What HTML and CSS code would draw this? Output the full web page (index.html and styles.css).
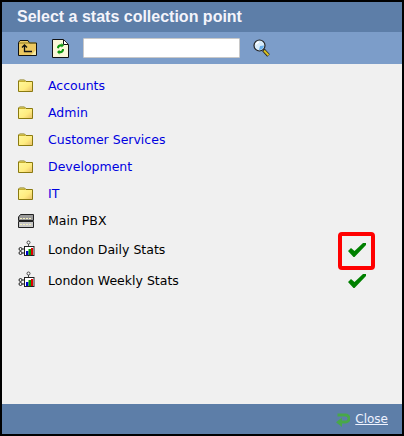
FILE: index.html
```html
<!DOCTYPE html>
<html lang="en">
<head>
<meta charset="utf-8">
<title>Select a stats collection point</title>
<link rel="stylesheet" href="styles.css">
</head>
<body>
<svg class="defs" width="0" height="0">
  <defs>
    <linearGradient id="fold" x1="0" y1="0" x2="1" y2="1"><stop offset="0" stop-color="#fffaa0"/><stop offset="0.6" stop-color="#ffec80"/><stop offset="1" stop-color="#e8bc68"/></linearGradient>
    <symbol id="folder" viewBox="0 0 16 14">
      <path d="M.5 12.500V2L1.500 1H6.500L8 2.500H14.500V12.500Z" fill="url(#fold)" stroke="#8a7a10" stroke-width="1"/>
      <path d="M1 2.500H7.500" stroke="#c8b030"/>
    </symbol>
    <symbol id="stats" viewBox="0 0 17 16">
      <circle cx="2.500" cy="9" r="1.500" fill="none" stroke="#222"/>
      <circle cx="2.500" cy="13" r="1.500" fill="none" stroke="#222"/>
      <path d="M4 9H6M4 13H6" stroke="#222"/>
      <circle cx="10.500" cy="2.500" r="1.500" fill="#fff" stroke="#444"/>
      <path d="M10.500 4V6" stroke="#444"/>
      <rect x="6.500" y="6.500" width="9.500" height="9" fill="#fff" stroke="#222"/>
      <rect x="8" y="11" width="2.500" height="4" fill="#0000d0"/>
      <rect x="10.500" y="9" width="2.500" height="6" fill="#00a000"/>
      <rect x="13" y="8" width="2" height="7" fill="#e00000"/>
    </symbol>
    <symbol id="check" viewBox="0 0 18 14">
      <path d="M0 8L3 5L6.500 8L15 0H18V2L6.500 14H5.500Z" fill="#008000"/>
    </symbol>
  </defs>
</svg>
<main class="dialog">
  <header class="title">Select a stats collection point</header>
  <div class="toolbar">
    <svg class="tool-up" width="21" height="18" viewBox="0 0 21 18">
      <path d="M1.500 16.500V3.500L3 1.500H11L12.500 4H19.500V16.500Z" fill="#ecc860" stroke="#111"/>
      <path d="M2 4H19" stroke="#8c7a20"/>
      <path d="M5 8.500L7.500 6L10 8.500M7.500 7V12.500H15" fill="none" stroke="#111" stroke-width="1.300"/>
      <path d="M14 16L19 11V16Z" fill="#f6e9a0"/>
    </svg>
    <svg class="tool-refresh" width="17" height="19" viewBox="0 0 17 19">
      <path d="M.5.500H11.500L16.500 5.500V18.500H.500Z" fill="#fbf8d8" stroke="#111"/>
      <path d="M11.500 1V5.500H16" fill="#fff" stroke="#111"/>
      <path d="M5 9A3.500 3.500 0 0 1 9.500 5.500V4L12 6.500L9.500 8.500V7.500A2 2 0 0 0 7 9.500Z" fill="#109810"/>
      <path d="M12 10A3.500 3.500 0 0 1 7.500 14V15.500L5 13L7.500 10.800V12A2 2 0 0 0 10 10Z" fill="#109810"/>
    </svg>
    <input class="search" type="text" aria-label="Search">
    <svg class="tool-find" width="18" height="18" viewBox="0 0 18 18">
      <path d="M10.500 11L15.500 16.500" stroke="#222" stroke-width="3.500"/>
      <path d="M11 11.500L15.500 16.300" stroke="#d8c020" stroke-width="2"/>
      <circle cx="6.500" cy="6.500" r="5.500" fill="#d8ecfa" stroke="#222" stroke-width="1.200"/>
      <path d="M3 5.500A4 4 0 0 1 6 3" stroke="#fff" stroke-width="1.500" fill="none"/>
      <path d="M6 11A4.500 4.500 0 0 0 11 6.500L7 7Z" fill="#6ab0ec"/>
    </svg>
  </div>
  <ul class="list">
    <li class="row"><svg class="icon"><use href="#folder"/></svg><a href="#">Accounts</a></li>
    <li class="row"><svg class="icon"><use href="#folder"/></svg><a href="#">Admin</a></li>
    <li class="row"><svg class="icon"><use href="#folder"/></svg><a href="#">Customer Services</a></li>
    <li class="row"><svg class="icon"><use href="#folder"/></svg><a href="#">Development</a></li>
    <li class="row"><svg class="icon"><use href="#folder"/></svg><a href="#">IT</a></li>
    <li class="row">
      <svg class="icon" viewBox="0 0 16 14">
        <path d="M.500 3L2.500.500H15.500V6.500H.500Z" fill="#9a9a9a" stroke="#222"/>
        <path d="M.500 7.500H15.500V13.500H.500Z" fill="#c8c8c8" stroke="#222"/>
        <path d="M2 4.500H14M2 10.500H14" stroke="#f4f0c0" stroke-dasharray="2 1"/>
      </svg>
      <span>Main PBX</span>
    </li>
    <li class="row row-stat"><svg class="icon"><use href="#stats"/></svg><span>London Daily Stats</span>
      <svg class="check"><use href="#check"/></svg>
      <span class="highlight"></span>
    </li>
    <li class="row row-stat"><svg class="icon"><use href="#stats"/></svg><span>London Weekly Stats</span>
      <svg class="check"><use href="#check"/></svg>
    </li>
  </ul>
  <footer class="footer">
    <svg class="close-icon" width="14" height="14" viewBox="0 0 14 14">
      <path d="M1.500 2H9.500A3.200 3.200 0 0 1 9.500 9H4.500" fill="none" stroke="#48a848" stroke-width="3"/>
      <path d="M6 4.500V14L0 9.200Z" fill="#48a848"/>
    </svg>
    <a href="#">Close</a>
  </footer>
</main>
</body>
</html>
```

FILE: styles.css
```css
* { box-sizing: border-box; }
html, body { margin: 0; padding: 0; }
body { width: 404px; height: 436px; background: #000; overflow: hidden; }
.defs { position: absolute; }
.dialog {
  width: 404px;
  height: 436px;
  border: 2px solid #000;
  display: flex;
  flex-direction: column;
  background: #f0f0f0;
  font: 12.5px/16px "DejaVu Sans", Verdana, sans-serif;
}
.title {
  height: 30px;
  padding-left: 15px;
  background: #5d7ea8;
  color: #f4f4fb;
  font: bold 16px/30px "Liberation Sans", Arial, sans-serif;
}
.toolbar {
  height: 32px;
  background: #7c9dc9;
  display: flex;
  align-items: center;
  padding-left: 15px;
}
.tool-refresh { margin-left: 14px; }
.search {
  width: 157px;
  height: 20px;
  margin-left: 14px;
  border: 1px solid #c8c8c8;
  border-radius: 1px;
  background: #fff;
  padding: 0;
}
.tool-find { margin-left: 13px; }
.list {
  flex: 1;
  list-style: none;
  margin: 0;
  padding: 8px 0 0;
}
.row {
  position: relative;
  height: 27px;
  display: flex;
  align-items: center;
  padding-left: 16px;
  color: #000;
}
.row-stat { height: 31px; }
.icon { width: 16px; height: 14px; margin-right: 14px; flex: none; }
.row-stat .icon { width: 17px; height: 16px; margin-right: 13px; margin-bottom: 4px; }
.row a { color: #0000e0; text-decoration: none; }
.check { width: 18px; height: 14px; margin-left: auto; margin-right: 36px; }
.highlight {
  position: absolute;
  left: 336px;
  top: -2px;
  width: 37px;
  height: 38px;
  border: 4px solid #f00;
  border-radius: 4px;
}
.footer {
  height: 30px;
  background: #5d7ea8;
  display: flex;
  align-items: center;
  justify-content: flex-end;
  gap: 5px;
  padding-right: 14px;
}
.close-icon { margin-top: 2px; }
.footer a { color: #eef2ff; font-size: 12px; }
```
